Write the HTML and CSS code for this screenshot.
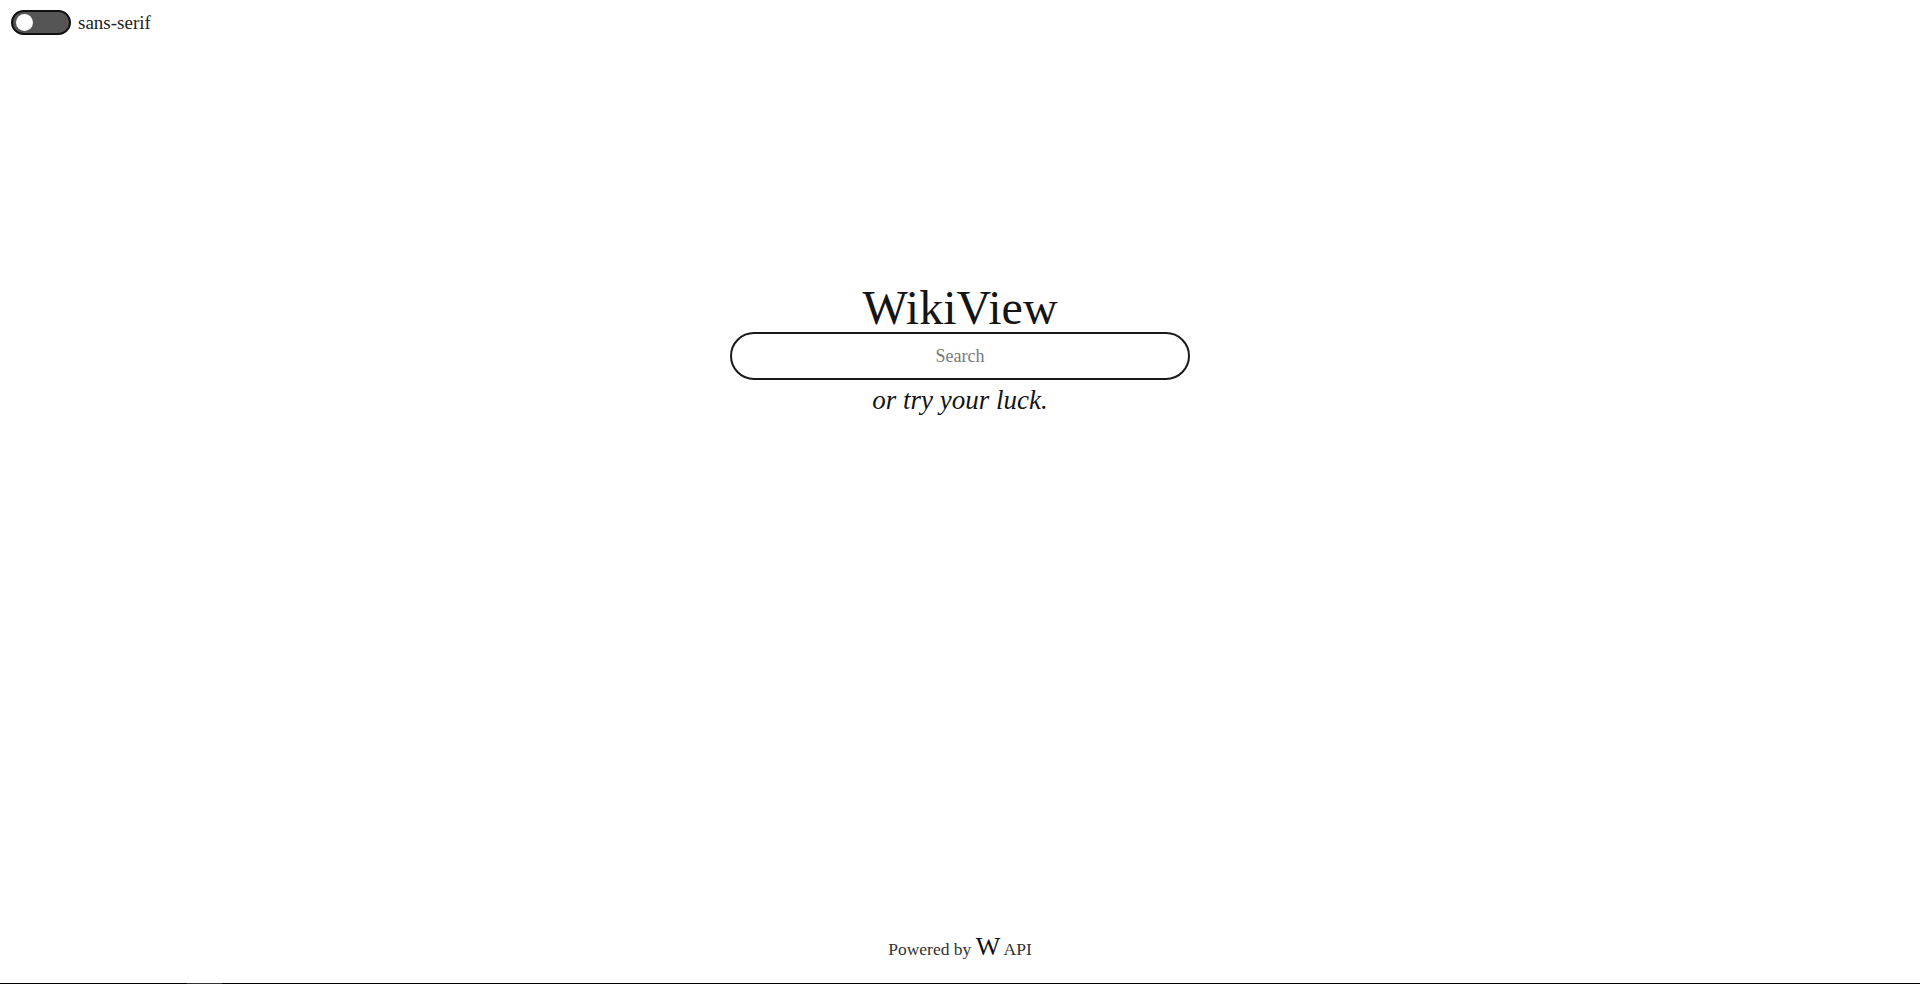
FILE: index.html
```html
<!DOCTYPE html>
<html lang="en">
<head>
<meta charset="utf-8">
<title>WikiView</title>
<link rel="stylesheet" href="styles.css">
</head>
<body>
<div class="page">
  <header class="topbar">
    <label class="switch">
      <span class="track"><span class="knob"></span></span>
      <span class="switch-label">sans-serif</span>
    </label>
  </header>
  <main class="hero">
    <h1 class="title">WikiView</h1>
    <input class="search" type="text" placeholder="Search">
    <p class="luck">or try your luck.</p>
  </main>
  <footer class="footer">
    <span>Powered by <span class="wlogo">W</span> API</span>
  </footer>
  <div class="bottom-line"></div>
</div>
</body>
</html>
```
FILE: styles.css
```css
html, body {
  margin: 0;
  padding: 0;
  background: #ffffff;
}

body {
  font-family: "Liberation Serif", "Times New Roman", serif;
  color: #1a1a1a;
}

.page {
  height: 100vh;
  display: flex;
  flex-direction: column;
}

.topbar {
  display: flex;
  align-items: center;
  padding: 10px 11px 0;
  height: 25px;
}

.switch {
  display: flex;
  align-items: center;
  gap: 7px;
  cursor: pointer;
}

.track {
  box-sizing: border-box;
  width: 60px;
  height: 25px;
  border: 2px solid #111111;
  border-radius: 13px;
  background: #555555;
  display: flex;
  align-items: center;
  padding-left: 3px;
}

.knob {
  width: 17px;
  height: 17px;
  border-radius: 50%;
  background: #ffffff;
}

.switch-label {
  font-size: 19px;
  color: #222222;
  line-height: 25px;
}

.hero {
  flex: 1;
  display: flex;
  flex-direction: column;
  align-items: center;
  padding-top: 249px;
}

.title {
  margin: 0;
  font-weight: 400;
  font-size: 48px;
  line-height: 48px;
  color: #151515;
}

.search {
  box-sizing: border-box;
  width: 460px;
  height: 48px;
  margin-top: 0;
  border: 2px solid #1a1a1a;
  border-radius: 24px;
  background: #ffffff;
  text-align: center;
  font-family: "Liberation Serif", "Times New Roman", serif;
  font-size: 18px;
  color: #222222;
  outline: none;
}

.search::placeholder {
  color: #7a7a7a;
}

.luck {
  margin: 4px 0 0;
  font-style: italic;
  font-size: 27px;
  line-height: 32px;
  color: #151515;
}

.footer {
  display: flex;
  justify-content: center;
  font-size: 17.5px;
  line-height: 24px;
  color: #333333;
  padding-bottom: 22px;
}

.wlogo {
  font-size: 26px;
  line-height: 24px;
  color: #111111;
}

.bottom-line {
  height: 1px;
  background: linear-gradient(to right, #000 0, #000 187px, #333 187px, #333 222px, #000 222px);
}
```
